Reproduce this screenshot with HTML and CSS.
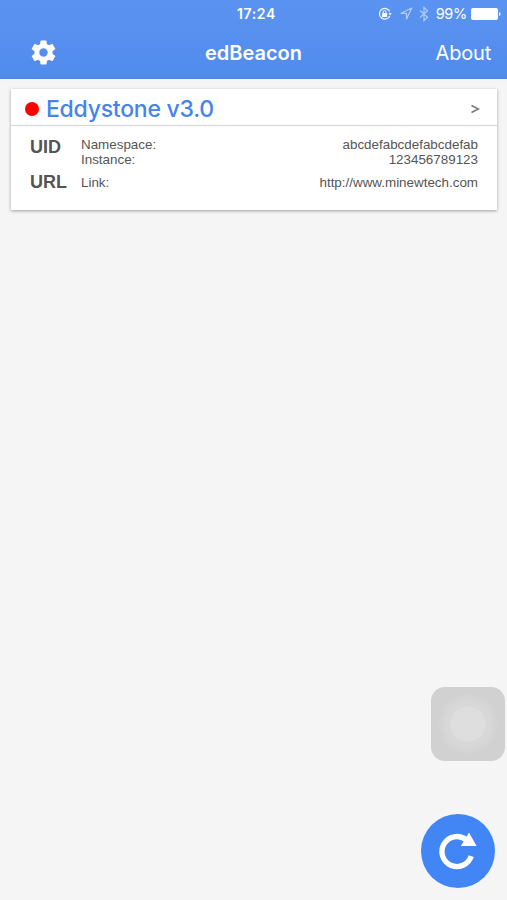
FILE: index.html
```
<!DOCTYPE html>
<html lang="en">
<head>
    <meta charset="UTF-8">
    <meta name="viewport" content="width=device-width, initial-scale=1.0">
    <title>edBeacon</title>
    <link rel="stylesheet" href="styles.css">
</head>
<body>
    <header class="top">
        <div class="status-bar">
            <div class="status-side"></div>
            <span class="status-time">17:24</span>
            <div class="status-side status-right">
                <svg class="icon-lock" width="14" height="14" viewBox="0 0 14 14">
                    <path d="M11.8 9A5.4 5.4 0 1 1 11.8 4.6" fill="none" stroke="#fff" stroke-width="1.2"/>
                    <path d="M10.6 6h3l-1.5 2.4z" fill="#fff"/>
                    <rect x="4" y="6" width="5.2" height="4" rx=".4" fill="#fff"/>
                    <path d="M5.2 6.4V5a1.4 1.4 0 0 1 2.8 0v1.4" fill="none" stroke="#fff"/>
                </svg>
                <svg class="icon-location" width="13" height="13" viewBox="0 0 13 13">
                    <path d="M11.8 1L1 6.3h5.5V12z" fill="none" stroke="#fff" stroke-width="1.2" stroke-linejoin="round"/>
                </svg>
                <svg class="icon-bluetooth" width="10" height="16" viewBox="0 0 10 16">
                    <path d="M1 4.5l7.5 6.8L5 14.6V1.4l3.5 3.3L1 11.5" fill="none" stroke="#fff" stroke-width="1.3"/>
                </svg>
                <span class="battery-text">99%</span>
                <svg class="icon-battery" width="30" height="12" viewBox="0 0 30 12">
                    <rect width="27" height="12" rx="2" fill="#fff"/>
                    <path d="M28 4q1.7.4 1.7 2T28 8z" fill="#fff"/>
                </svg>
            </div>
        </div>
        <nav class="nav-bar">
            <div class="nav-side">
                <svg class="icon-gear" width="29" height="29" viewBox="0 0 24 24">
                    <path fill="#fff" d="M19.43 12.98c.04-.32.07-.64.07-.98s-.03-.66-.07-.98l2.11-1.65c.19-.15.24-.42.12-.64l-2-3.46c-.12-.22-.39-.3-.61-.22l-2.49 1c-.52-.4-1.08-.73-1.69-.98l-.38-2.65C14.46 2.18 14.25 2 14 2h-4c-.25 0-.46.18-.49.42l-.38 2.65c-.61.25-1.17.59-1.69.98l-2.49-1c-.23-.09-.49 0-.61.22l-2 3.46c-.13.22-.07.49.12.64l2.11 1.65c-.04.32-.07.65-.07.98s.03.66.07.98l-2.11 1.65c-.19.15-.24.42-.12.64l2 3.46c.12.22.39.3.61.22l2.49-1c.52.4 1.08.73 1.69.98l.38 2.65c.03.24.24.42.49.42h4c.25 0 .46-.18.49-.42l.38-2.65c.61-.25 1.17-.59 1.69-.98l2.49 1c.23.09.49 0 .61-.22l2-3.46c.12-.22.07-.49-.12-.64l-2.11-1.65zM12 15.5c-1.93 0-3.5-1.57-3.5-3.5s1.57-3.5 3.5-3.5 3.5 1.57 3.5 3.5-1.57 3.5-3.5 3.5z"/>
                </svg>
            </div>
            <h1 class="nav-title">edBeacon</h1>
            <div class="nav-side nav-right"><span class="about">About</span></div>
        </nav>
    </header>

    <main class="beacon-list">
        <section class="card">
            <div class="card-header">
                <span class="dot"></span>
                <h2 class="card-title">Eddystone v3.0</h2>
                <svg class="chevron" width="9" height="10" viewBox="0 0 9 10">
                    <path d="M.5 1.5L7.5 5l-7 3.5" fill="none" stroke="#777" stroke-width="1.5"/>
                </svg>
            </div>
            <div class="card-body">
                <div class="frame">
                    <div class="frame-type">UID</div>
                    <div class="frame-rows">
                        <div class="row"><span>Namespace:</span><span>abcdefabcdefabcdefab</span></div>
                        <div class="row"><span>Instance:</span><span>123456789123</span></div>
                    </div>
                </div>
                <div class="frame">
                    <div class="frame-type">URL</div>
                    <div class="frame-rows">
                        <div class="row"><span>Link:</span><span>http://www.minewtech.com</span></div>
                    </div>
                </div>
            </div>
        </section>
    </main>

    <div class="assistive"></div>
    <div class="refresh">
        <svg width="74" height="74" viewBox="0 0 74 74">
            <path d="M45 25.6A15 15 0 1 0 50.2 42.2" fill="none" stroke="#fff" stroke-width="5.4"/>
            <path d="M48 18.6L55.6 32H39.8z" fill="#fff"/>
        </svg>
    </div>
</body>
</html>
```

FILE: styles.css
```
* {
    box-sizing: border-box;
}

body {
    margin: 0;
    height: 900px;
    position: relative;
    overflow: hidden;
    background: #f5f5f5;
    font-family: "Liberation Sans", Arial, sans-serif;
    color: #555;
}

.top {
    height: 79px;
    background: linear-gradient(#5b93f2, #518beb);
    border-bottom: 1px solid #4c82dc;
    color: #fff;
    font-family: Inter, sans-serif;
}

.status-bar {
    display: flex;
    align-items: center;
    height: 27px;
}

.status-side,
.nav-side {
    flex: 1;
    display: flex;
    align-items: center;
}

.status-time {
    font-size: 14px;
    font-weight: 600;
    letter-spacing: 0.6px;
    padding-left: 12px;
}

.status-right {
    justify-content: flex-end;
    padding-right: 6px;
}

.icon-lock {
    margin-right: 8px;
    opacity: 0.95;
}

.icon-location {
    margin-right: 6px;
    opacity: 0.55;
}

.icon-bluetooth {
    margin-right: 7px;
    opacity: 0.5;
}

.battery-text {
    font-size: 14.5px;
    letter-spacing: -0.3px;
    margin-right: 4px;
}

.nav-bar {
    display: flex;
    align-items: center;
    height: 50px;
}

.icon-gear {
    margin-left: 29px;
}

.nav-title {
    margin: 0;
    padding: 1px 0 0 16px;
    font-size: 20px;
    font-weight: 600;
}

.nav-right {
    justify-content: flex-end;
    padding-right: 16px;
}

.about {
    padding-top: 1px;
    font-size: 20px;
    letter-spacing: -0.2px;
}

.beacon-list {
    padding: 10px 10px 0 11px;
}

.card {
    height: 121px;
    background: #fff;
    box-shadow: 0 1px 3px rgba(0, 0, 0, 0.35);
}

.card-header {
    display: flex;
    align-items: center;
    height: 37px;
    padding: 3px 17px 0 14px;
    border-bottom: 1px solid #d5d5d5;
}

.dot {
    width: 14px;
    height: 14px;
    margin-right: 7px;
    border-radius: 50%;
    background: #fe0000;
}

.card-title {
    flex: 1;
    margin: 0;
    font-family: Inter, sans-serif;
    font-size: 23px;
    font-weight: 500;
    letter-spacing: -0.25px;
    color: #4583ee;
}

.card-body {
    padding: 11px 19px 0 19px;
}

.frame {
    display: flex;
    margin-bottom: 8px;
}

.frame-type {
    width: 51px;
    font-size: 18px;
    line-height: 20px;
    font-weight: bold;
}

.frame + .frame .frame-type {
    line-height: 15px;
}

.frame-rows {
    flex: 1;
}

.row {
    display: flex;
    justify-content: space-between;
    font-size: 13.4px;
    line-height: 15px;
}

/* floating buttons */
.assistive {
    position: absolute;
    left: 431px;
    top: 687px;
    width: 74px;
    height: 74px;
    border-radius: 14px;
    background: radial-gradient(circle, #dedede 0 17px, #d8d8d8 18px 22px, #d4d4d4 27px, #d1d1d1 31px);
}

.refresh {
    position: absolute;
    left: 421px;
    top: 814px;
    width: 74px;
    height: 74px;
    border-radius: 50%;
    background: #4285f4;
}

.refresh svg {
    display: block;
}
```
